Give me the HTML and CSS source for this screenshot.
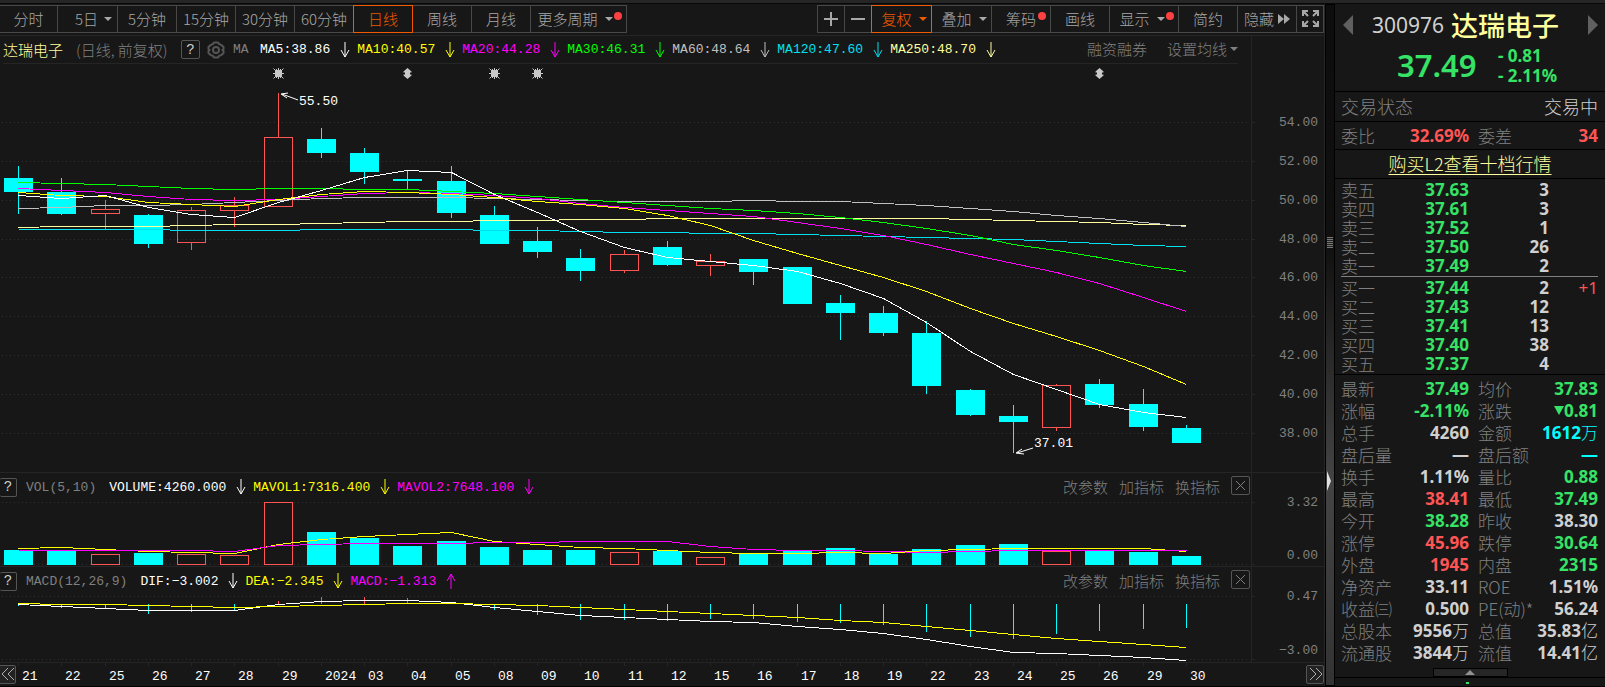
FILE: index.html
```html
<!DOCTYPE html>
<html lang="zh-CN">
<head>
    <meta charset="UTF-8">
    <meta name="viewport" content="width=device-width, initial-scale=1.0">
    <title>达瑞电子 300976</title>
    <link rel="stylesheet" href="styles.css">
</head>
<body>
    <div class="topstrip"></div>
    <div class="layout">
        <main class="main">
            <div class="toolbar">
                <div class="group periods">
                    <button type="button">分时</button>
                    <button type="button" class="day5">5日<i class="caret"></i></button>
                    <button type="button">5分钟</button>
                    <button type="button">15分钟</button>
                    <button type="button">30分钟</button>
                    <button type="button">60分钟</button>
                    <button type="button" class="active">日线</button>
                    <button type="button">周线</button>
                    <button type="button">月线</button>
                    <button type="button" class="more">更多周期<i class="caret"></i><i class="dot"></i></button>
                </div>
                <div class="group">
                    <button type="button" class="zoom" aria-label="放大"><svg width="14" height="14"><path d="M7 0V14M0 7H14"/></svg></button>
                    <button type="button" class="zoom" aria-label="缩小"><svg width="14" height="14"><path d="M0 7H14"/></svg></button>
                    <button type="button" class="drop active">复权<i class="caret"></i></button>
                    <button type="button" class="drop">叠加<i class="caret"></i></button>
                    <button type="button">筹码<i class="dot"></i></button>
                    <button type="button">画线</button>
                    <button type="button" class="show">显示<i class="caret"></i><i class="dot"></i></button>
                    <button type="button">简约</button>
                    <button type="button">隐藏<svg class="ff" width="12" height="10"><path d="M0 0L6 5L0 10ZM6 0L12 5L6 10Z"/></svg></button>
                    <button type="button" class="zoom" aria-label="全屏"><svg class="expand" width="17" height="17"><path d="M1 6V1H6M1 1L6 6M11 1H16V6M16 1L11 6M1 11V16H6M1 16L6 11M16 11V16H11M16 16L11 11"/></svg></button>
                </div>
            </div>

            <!-- K线 -->
            <section class="pane">
                <div class="plot">
                    <div class="legend legend-main">
                        <span class="stock">达瑞电子</span>
                        <span class="sub">(日线, 前复权)</span>
                        <button type="button" class="help">?</button>
                        <button type="button" class="gear" aria-label="设置">
                            <svg width="18" height="18"><path d="M6 3L7 1.5H11L12 3L14.5 4L16.5 6V8L15.5 9L16.5 10V12L14.5 14L12 15L11 16.5H7L6 15L3.5 14L1.5 12V10L2.5 9L1.5 8V6L3.5 4Z"/><circle cx="9" cy="9" r="3"/></svg>
                        </button>
                        <span class="mono ma">MA</span>
                        <span class="mono val white">MA5:38.86<svg class="arrow"><path d="M5 0V15M1 8L5 15L9 8"/></svg></span>
                        <span class="mono val yellow">MA10:40.57<svg class="arrow"><path d="M5 0V15M1 8L5 15L9 8"/></svg></span>
                        <span class="mono val magenta">MA20:44.28<svg class="arrow"><path d="M5 0V15M1 8L5 15L9 8"/></svg></span>
                        <span class="mono val lime">MA30:46.31<svg class="arrow"><path d="M5 0V15M1 8L5 15L9 8"/></svg></span>
                        <span class="mono val silver">MA60:48.64<svg class="arrow"><path d="M5 0V15M1 8L5 15L9 8"/></svg></span>
                        <span class="mono val aqua">MA120:47.60<svg class="arrow"><path d="M5 0V15M1 8L5 15L9 8"/></svg></span>
                        <span class="mono val cream">MA250:48.70<svg class="arrow"><path d="M5 0V15M1 8L5 15L9 8"/></svg></span>
                        <div class="links">
                            <button type="button">融资融券</button>
                            <button type="button">设置均线<i class="caret"></i></button>
                        </div>
                    </div>
                    <svg class="chart chart-k" id="kline"></svg>
                </div>
                <svg class="axis" id="axisK"></svg>
            </section>

            <!-- 成交量 -->
            <section class="pane">
                <div class="plot">
                    <div class="legend">
                        <button type="button" class="help edge">?</button>
                        <span class="mono name">VOL(5,10)</span>
                        <span class="mono val white">VOLUME:4260.000<svg class="arrow"><path d="M5 0V15M1 8L5 15L9 8"/></svg></span>
                        <span class="mono val yellow">MAVOL1:7316.400<svg class="arrow"><path d="M5 0V15M1 8L5 15L9 8"/></svg></span>
                        <span class="mono val magenta">MAVOL2:7648.100<svg class="arrow"><path d="M5 0V15M1 8L5 15L9 8"/></svg></span>
                        <div class="links tools">
                            <button type="button">改参数</button>
                            <button type="button">加指标</button>
                            <button type="button">换指标</button>
                            <button type="button" class="close" aria-label="关闭"><svg width="11" height="11"><path d="M1 1L10 10M10 1L1 10"/></svg></button>
                        </div>
                    </div>
                    <svg class="chart chart-vol" id="volume"></svg>
                </div>
                <svg class="axis" id="axisVol"></svg>
            </section>

            <!-- MACD -->
            <section class="pane">
                <div class="plot">
                    <div class="legend">
                        <button type="button" class="help edge">?</button>
                        <span class="mono name">MACD(12,26,9)</span>
                        <span class="mono val white">DIF:−3.002<svg class="arrow"><path d="M5 0V15M1 8L5 15L9 8"/></svg></span>
                        <span class="mono val yellow">DEA:−2.345<svg class="arrow"><path d="M5 0V15M1 8L5 15L9 8"/></svg></span>
                        <span class="mono val magenta">MACD:−1.313<svg class="arrow"><path d="M5 16V1M1 8L5 1L9 8"/></svg></span>
                        <div class="links tools">
                            <button type="button">改参数</button>
                            <button type="button">加指标</button>
                            <button type="button">换指标</button>
                            <button type="button" class="close" aria-label="关闭"><svg width="11" height="11"><path d="M1 1L10 10M10 1L1 10"/></svg></button>
                        </div>
                    </div>
                    <svg class="chart chart-macd" id="macd"></svg>
                </div>
                <svg class="axis" id="axisMacd"></svg>
            </section>

            <div class="timeline">
                <svg class="dates" id="dates"></svg>
                <button type="button" class="page prev" aria-label="向前"><svg width="13" height="13"><path d="M7 0L1 6L7 12M13 0L7 6L13 12"/></svg></button>
                <button type="button" class="page next" aria-label="向后"><svg width="13" height="13"><path d="M1 0L7 6L1 12M7 0L13 6L7 12"/></svg></button>
            </div>
        </main>

        <div class="splitter">
            <i class="grip"></i>
            <i class="fold"></i>
        </div>

        <aside class="side">
            <div class="quote">
                <div class="title">
                    <button type="button" aria-label="上一只"><svg width="10" height="20"><path d="M10 0V20L0 10Z"/></svg></button>
                    <span class="code">300976</span>
                    <h1>达瑞电子</h1>
                    <button type="button" class="right" aria-label="下一只"><svg width="10" height="20"><path d="M0 0V20L10 10Z"/></svg></button>
                </div>
                <div class="price">
                    <strong>37.49</strong>
                    <div class="change"><span>- 0.81</span><span>- 2.11%</span></div>
                </div>
            </div>
            <div class="status"><span>交易状态</span><b>交易中</b></div>
            <table class="stats ratio">
                <tr><th>委比</th><td class="up">32.69%</td><th>委差</th><td class="up">34</td></tr>
            </table>
            <div class="buy"><a href="#">购买L2查看十档行情</a></div>
            <div class="depth">
                <table class="orders">
                    <tr><th>卖五</th><td class="down">37.63</td><td>3</td><td></td></tr>
                    <tr><th>卖四</th><td class="down">37.61</td><td>3</td><td></td></tr>
                    <tr><th>卖三</th><td class="down">37.52</td><td>1</td><td></td></tr>
                    <tr><th>卖二</th><td class="down">37.50</td><td>26</td><td></td></tr>
                    <tr><th>卖一</th><td class="down">37.49</td><td>2</td><td></td></tr>
                </table>
                <hr>
                <table class="orders">
                    <tr><th>买一</th><td class="down">37.44</td><td>2</td><td class="delta">+1</td></tr>
                    <tr><th>买二</th><td class="down">37.43</td><td>12</td><td></td></tr>
                    <tr><th>买三</th><td class="down">37.41</td><td>13</td><td></td></tr>
                    <tr><th>买四</th><td class="down">37.40</td><td>38</td><td></td></tr>
                    <tr><th>买五</th><td class="down">37.37</td><td>4</td><td></td></tr>
                </table>
            </div>
            <table class="stats">
                <tr><th>最新</th><td class="down">37.49</td><th>均价</th><td class="down">37.83</td></tr>
                <tr><th>涨幅</th><td class="down">-2.11%</td><th>涨跌</th><td class="down"><i class="fall"></i>0.81</td></tr>
                <tr><th>总手</th><td>4260</td><th>金额</th><td class="cyan">1612<span>万</span></td></tr>
                <tr><th>盘后量</th><td>—</td><th>盘后额</th><td class="cyan">—</td></tr>
                <tr><th>换手</th><td>1.11%</td><th>量比</th><td class="down">0.88</td></tr>
                <tr><th>最高</th><td class="up">38.41</td><th>最低</th><td class="down">37.49</td></tr>
                <tr><th>今开</th><td class="down">38.28</td><th>昨收</th><td>38.30</td></tr>
                <tr><th>涨停</th><td class="up">45.96</td><th>跌停</th><td class="down">30.64</td></tr>
                <tr><th>外盘</th><td class="up">1945</td><th>内盘</th><td class="down">2315</td></tr>
                <tr><th>净资产</th><td>33.11</td><th>ROE</th><td>1.51%</td></tr>
                <tr><th>收益㈢</th><td>0.500</td><th>PE(动)*</th><td>56.24</td></tr>
                <tr><th>总股本</th><td>9556<span>万</span></td><th>总值</th><td>35.83<span>亿</span></td></tr>
                <tr><th>流通股</th><td>3844<span>万</span></td><th>流值</th><td>14.41<span>亿</span></td></tr>
            </table>
            <button type="button" class="expander" aria-label="展开"><svg width="10" height="5"><path d="M5 0L10 5H0Z"/></svg></button>
            <div class="tick"></div>
        </aside>
    </div>
    <script src="chart.js"></script>
</body>
</html>
```

FILE: styles.css
```css
* {
    box-sizing: border-box;
}
body {
    margin: 0;
    background: #000;
    color: #d0d0d0;
    font-family: "Noto Sans CJK SC", sans-serif;
    font-size: 15px;
    font-weight: 300;
}
button {
    margin: 0;
    padding: 0;
    border: none;
    background: none;
    color: inherit;
    font: inherit;
    cursor: pointer;
}
svg {
    display: block;
    fill: none;
    stroke: currentColor;
}
.topstrip {
    height: 4px;
    background: #262626;
    border-bottom: 1px solid #080808;
}
.layout {
    display: flex;
    align-items: stretch;
}
.main {
    flex: 1;
    min-width: 0;
    background: #171717;
    border-right: 1px solid #262626;
}

/* toolbar */
.toolbar {
    display: flex;
    justify-content: space-between;
    height: 32px;
    padding-top: 1px;
    border-bottom: 1px solid #252525;
}
.group {
    display: flex;
}
.group button {
    position: relative;
    display: flex;
    align-items: center;
    justify-content: center;
    width: 60px;
    height: 28px;
    margin-left: -1px;
    padding-bottom: 1px;
    border: 1px solid #484848;
    color: #a8a8a8;
    white-space: nowrap;
}
.group button.active {
    z-index: 1;
    border-color: #f05a00;
    color: #f05a00;
}
.periods button:first-child {
    width: 59px;
}
.group .day5 {
    width: 61px;
    padding-left: 12px;
}
.group .more {
    width: 97px;
    padding-right: 7px;
}
.group .zoom {
    width: 28px;
}
.group .drop {
    width: 61px;
    padding-left: 5px;
}
.group .show {
    width: 70px;
    padding-right: 4px;
}
.zoom svg {
    stroke-width: 2;
}
.group .ff {
    margin-left: 4px;
    fill: #a8a8a8;
    stroke: none;
}
.caret {
    margin-left: 7px;
    border: 4px solid transparent;
    border-top-color: currentColor;
    border-bottom: none;
}
.day5 .caret {
    margin-left: 6px;
}
.dot {
    position: absolute;
    top: 6px;
    right: 4px;
    width: 8px;
    height: 8px;
    border-radius: 50%;
    background: #ff4040;
}

/* chart panes */
.pane {
    display: grid;
    grid-template-columns: 1fr 73px;
    border-bottom: 1px solid #252525;
}
.plot {
    min-width: 0;
}
.legend {
    display: flex;
    align-items: center;
    height: 28px;
    color: #808080;
    white-space: nowrap;
}
.legend-main {
    margin: 0 13px 0 3px;
    border-bottom: 1px solid #252525;
}
.mono {
    font-family: "Liberation Mono", monospace;
    font-size: 13px;
    font-weight: 400;
}
.stock {
    color: #ffff9e;
}
.sub {
    width: 108px;
    padding-left: 13px;
}
.help,
.close {
    display: flex;
    align-items: center;
    justify-content: center;
    width: 19px;
    height: 19px;
    margin: 0 7px 0 11px;
    border: 1px solid #555;
    border-radius: 2px;
    color: #d0d0d0;
    font-family: "Liberation Mono", monospace;
    font-size: 14px;
}
.legend-main .help {
    margin-left: 10px;
}
.help.edge {
    width: 17px;
    margin: 0 9px 0 0;
    border-left: none;
}
.gear {
    color: #555;
}
.gear svg {
    stroke-width: 2;
}
.ma {
    width: 35px;
    padding-left: 8px;
}
.name {
    margin-right: 13px;
}
.val {
    display: flex;
    align-items: center;
    margin-right: 7px;
}
.arrow {
    width: 10px;
    height: 16px;
    margin-left: 10px;
}
.white { color: #fff; }
.yellow { color: #ff0; }
.magenta { color: #f0f; }
.lime { color: #0f0; }
.silver { color: #c0c0c0; }
.aqua { color: #00e0f0; }
.cream { color: #ffff9e; }
.links {
    display: flex;
    gap: 20px;
    margin-left: auto;
}
.links button {
    display: flex;
    align-items: center;
    padding-bottom: 2px;
}
.links .caret {
    margin-left: 3px;
}
.tools {
    gap: 11px;
}
.tools .close {
    width: 19px;
    margin: 0 1px 0 0;
    padding: 0;
    color: #808080;
}
.chart,
.axis,
.dates {
    width: 100%;
    overflow: hidden;
}
.chart-k { height: 408px; }
.chart-vol { height: 65px; }
.chart-macd { height: 67px; }
.axis {
    height: 100%;
    border-left: 1px solid #252525;
}
.crisp {
    shape-rendering: crispEdges;
}
.grid {
    stroke: #303030;
    stroke-dasharray: 1 3;
}
.mark {
    stroke: #252525;
}
.label {
    fill: #808080;
    stroke: none;
    font-family: "Liberation Mono", monospace;
    font-size: 13px;
    font-weight: 400;
}
.label.bright {
    fill: #fff;
}
.bar-down {
    fill: #0ff;
    stroke: none;
}
.line-down { stroke: #0ff; }
.line-up { stroke: #ff5555; }
.event {
    fill: #c8c8c8;
    stroke: none;
}
.rays {
    stroke: #c8c8c8;
}
.timeline {
    position: relative;
}
.dates {
    height: 23px;
}
.page {
    position: absolute;
    top: 2px;
    display: flex;
    align-items: center;
    justify-content: center;
    width: 18px;
    height: 19px;
    border: 1px solid #555;
    border-radius: 2px;
    background: #222;
    color: #b0b0b0;
}
.prev {
    left: -2px;
}
.next {
    right: 0;
}

/* splitter between chart and quote */
.splitter {
    position: relative;
    width: 10px;
    border: 1px solid #000;
    background: linear-gradient(#0d0d0d 0, #101010 35%, #444 70%, #333 100%);
}
.grip {
    position: absolute;
    top: 232px;
    left: 1px;
    width: 6px;
    height: 11px;
    background: repeating-linear-gradient(#777 0 1px, #222 1px 2px);
}
.fold {
    position: absolute;
    top: 466px;
    left: 1px;
    border: 10px solid transparent;
    border-left: 4px solid #e0e0e0;
    border-right: none;
}

/* quote panel */
.side {
    width: 270px;
    background: #171717;
}
.quote {
    height: 88px;
    padding: 3px 7px 0 8px;
    border-bottom: 1px solid #000;
}
.title {
    display: flex;
    align-items: center;
    height: 36px;
    color: #606060;
}
.title svg {
    fill: currentColor;
    stroke: none;
}
.title .right {
    margin-left: auto;
}
.code {
    margin: 0 7px 0 19px;
    color: #d0d0d0;
    font-family: "Noto Sans", sans-serif;
    font-size: 21px;
    font-weight: 400;
}
h1 {
    margin: 0;
    color: #ffff9e;
    font-size: 27px;
    font-weight: 500;
    line-height: 36px;
}
.price {
    display: flex;
    align-items: center;
    height: 46px;
    padding-left: 54px;
    color: #36e366;
    font-family: "Noto Sans", sans-serif;
}
.price strong {
    width: 101px;
    padding-bottom: 3px;
    font-size: 31px;
    font-weight: 600;
    line-height: 40px;
}
.change {
    display: grid;
    font-size: 17px;
    font-weight: 700;
    line-height: 20px;
}
.status {
    display: flex;
    align-items: center;
    justify-content: space-between;
    height: 30px;
    padding: 0 7px 2px 6px;
    border-bottom: 1px solid #000;
    color: #808080;
    font-size: 18px;
    line-height: 26px;
}
.status b {
    color: #d0d0d0;
    font-weight: 300;
}
.buy {
    height: 29px;
    border-bottom: 1px solid #000;
    font-size: 18px;
    line-height: 26px;
    text-align: center;
}
.buy a {
    color: #ffff9e;
    text-underline-offset: 3px;
}
table {
    width: 100%;
    border-collapse: collapse;
}
th {
    padding: 0;
    color: #808080;
    font-size: 17px;
    font-weight: 300;
    text-align: left;
    white-space: nowrap;
}
td {
    padding: 0;
    font-family: "Noto Sans", "Noto Sans CJK SC", sans-serif;
    font-size: 17px;
    font-weight: 700;
    text-align: right;
    white-space: nowrap;
}
td span {
    font-family: "Noto Sans CJK SC", sans-serif;
    font-weight: 300;
    line-height: 0;
}
.depth {
    padding: 1px 7px 1px 6px;
    border-bottom: 1px solid #000;
}
.depth hr {
    margin: 1px 0;
    border: none;
    border-top: 1px solid #808080;
}
.orders {
    table-layout: fixed;
}
.orders tr {
    height: 19px;
    line-height: 19px;
}
.orders th { width: 46px; }
.orders td:nth-child(2) { width: 82px; }
.orders td:nth-child(3) { width: 80px; }
.orders .delta {
    color: #ff5555;
    font-weight: 400;
}
.stats {
    width: calc(100% - 13px);
    margin: 3px 7px 4px 6px;
}
.stats tr {
    height: 22px;
    line-height: 20px;
}
.stats th:first-child { width: 54px; }
.stats td:nth-child(2) { width: 74px; }
.stats th:nth-child(3) { padding-left: 9px; }
.ratio {
    width: 100%;
    margin: 0;
    border-bottom: 1px solid #000;
    border-collapse: separate;
    border-spacing: 0;
}
.ratio tr {
    height: 27px;
}
.ratio th:first-child {
    width: 60px;
    padding-left: 6px;
}
.ratio td:last-child {
    padding-right: 7px;
}
.up { color: #ff5555; }
.down { color: #36e366; }
.cyan { color: #0ff; }
.fall {
    display: inline-block;
    margin-bottom: 2px;
    border: 5px solid transparent;
    border-top: 9px solid #36e366;
    border-bottom: none;
}
.expander {
    display: flex;
    align-items: center;
    justify-content: center;
    width: 75px;
    height: 9px;
    margin: 0 auto;
    border: 1px solid #000;
    background: #262626;
    color: #909090;
}
.expander svg {
    fill: currentColor;
    stroke: none;
}
.tick {
    height: 7px;
    border-top: 1px solid #000;
    background: linear-gradient(#36e366, #36e366) 131px 4px / 3px 3px no-repeat;
}
```

FILE: chart.js
```js
// body top, body bottom, high, low, 1 = rising
const candles = [
    [178, 192, 166, 214, 0], [192, 214, 178, 215, 0], [209, 213, 200, 229, 1], [215, 244, 214, 248, 0],
    [210, 242, 207, 250, 1], [205, 210, 197, 227, 1], [137, 206, 93, 206, 1], [139, 153, 128, 158, 0],
    [153, 172, 148, 184, 0], [179, 181, 170, 189, 0], [181, 213, 166, 218, 0], [215, 244, 206, 244, 0],
    [241, 252, 227, 258, 0], [258, 271, 249, 281, 0], [254, 270, 250, 273, 1], [247, 265, 241, 266, 0],
    [261, 265, 254, 276, 1], [259, 272, 259, 285, 0], [267, 304, 267, 304, 0], [303, 313, 295, 340, 0],
    [313, 333, 306, 336, 0], [333, 386, 321, 394, 0], [390, 415, 389, 416, 0], [416, 422, 405, 453, 0],
    [385, 427, 384, 431, 1], [384, 405, 379, 408, 0], [404, 427, 389, 431, 0], [428, 443, 425, 443, 0]
];
const averages = {
    '#00e0f0': [229, 229, 229, 229, 230, 230, 230, 229, 229, 229, 229, 230, 230, 231, 232, 232, 233, 233, 234, 235, 236, 237, 238, 239, 241, 243, 245, 246],
    '#ffff9e': [227, 226, 226, 226, 225, 224, 224, 223, 222, 221, 221, 220, 220, 219, 219, 218, 218, 218, 218, 218, 218, 218, 219, 220, 221, 222, 224, 225],
    '#c0c0c0': [208, 207, 205, 205, 204, 202, 200, 198, 197, 197, 197, 198, 199, 200, 201, 201, 201, 200, 201, 201, 203, 205, 208, 211, 215, 218, 222, 226],
    '#00ff00': [182, 183, 184, 186, 188, 189, 188, 188, 189, 189, 191, 193, 196, 199, 202, 205, 208, 210, 213, 217, 222, 228, 235, 244, 250, 257, 265, 271],
    '#ff00ff': [188, 190, 192, 196, 199, 200, 199, 196, 193, 192, 193, 195, 198, 203, 207, 210, 213, 216, 222, 228, 235, 244, 254, 263, 272, 283, 297, 311],
    '#ffff00': [192, 195, 196, 202, 204, 206, 199, 194, 191, 192, 194, 197, 201, 204, 208, 215, 225, 240, 253, 265, 277, 291, 308, 323, 336, 350, 366, 384],
    '#ffffff': [195, 198, 195, 207, 214, 217, 202, 190, 177, 170, 172, 194, 212, 231, 247, 257, 261, 265, 271, 283, 298, 322, 351, 374, 389, 404, 412, 417]
};
const volumes = [550, 551, 554, 553, 554, 555, 502, 532, 538, 546, 541, 547, 550, 550, 552, 551, 557, 554, 551, 548, 554, 549, 545, 544, 551, 551, 552, 556];
const volumeAverages = {
    '#ffff00': [548, 547, 549, 551, 552, 553, 544, 539, 536, 534, 532, 541, 544, 547, 548, 550, 552, 553, 553, 552, 553, 550, 549, 548, 548, 548, 548, 551],
    '#ff00ff': [550, 550, 550, 550, 550, 551, 545, 544, 543, 543, 543, 542, 542, 541, 541, 541, 546, 549, 550, 550, 551, 552, 551, 550, 550, 550, 550, 550]
};
const sticks = [606, 608, 609, 614, 612, 610, 601, 597, 597, 598, 603, 610, 615, 620, 620, 621, 619, 619, 622, 623, 625, 632, 637, 639, 634, 631, 629, 628];
const macdLines = {
    '#ffffff': [604, 606, 608, 610, 610, 610, 604, 601, 600, 600, 602, 607, 611, 615, 617, 619, 621, 622, 626, 629, 633, 639, 646, 652, 653, 655, 657, 660],
    '#ffff00': [603, 604, 604, 605, 606, 607, 606, 605, 604, 603, 603, 604, 605, 607, 609, 611, 613, 615, 617, 620, 622, 626, 630, 634, 638, 641, 644, 647]
};
const days = ['21', '22', '25', '26', '27', '28', '29', '2024', '03', '04', '05', '08', '09', '10', '11', '12', '15', '16', '17', '18', '19', '22', '23', '24', '25', '26', '29', '30'];

const FIRST = 18;
const LAST_GAP = 65;
let width;

function x(i) {
    return Math.round(FIRST + i * (width - FIRST - LAST_GAP) / (days.length - 1));
}

function line(x1, y1, x2, y2, cls) {
    return `<line class="crisp ${cls}" x1="${x1}" y1="${y1}" x2="${x2}" y2="${y2}"/>`;
}

function grid(ys) {
    return ys.map(y => line(2, y + 0.5, width - 3, y + 0.5, 'grid')).join('');
}

function curves(set) {
    return Object.entries(set).map(([color, ys]) =>
        `<polyline class="crisp" stroke="${color}" points="${ys.map((y, i) => `${x(i) + 0.5},${y + 0.5}`).join(' ')}"/>`
    ).join('');
}

function bar(i, top, bottom, rising) {
    if (rising) {
        return `<rect class="crisp line-up" x="${x(i) - 13.5}" y="${top + 0.5}" width="28" height="${bottom - top}"/>`;
    }
    return `<rect class="crisp bar-down" x="${x(i) - 14}" y="${top}" width="29" height="${bottom - top}"/>`;
}

function text(tx, y, str, cls = '', anchor = 'start') {
    return `<text class="label ${cls}" x="${tx}" y="${y}" text-anchor="${anchor}">${str}</text>`;
}

function star(i) {
    return `<g transform="translate(${x(i) + 0.5} 73.5)">
        <path class="event" d="M-3.5-3.5H3.5V3.5H-3.5Z"/>
        <path class="rays" d="M0-5.5V5.5M-5.5 0H5.5M-5-5L5 5M5-5L-5 5M-2-4.5V4.5M2-4.5V4.5"/>
    </g>`;
}

function updown(i) {
    return `<path class="event" transform="translate(${x(i) + 0.5} 73.5)" d="M0-5.5L4-2V-1H2.5V1H4V2L0 5.5L-4 2V1H-2.5V-1H-4V-2Z"/>`;
}

// view is [top, height] of the pane on the shared y scale
function put(id, view, html) {
    const svg = document.getElementById(id);
    svg.setAttribute('viewBox', `0 ${view[0]} ${svg.clientWidth} ${view[1]}`);
    svg.innerHTML = html;
}

function axis(id, view, ticks) {
    put(id, view, ticks.map(([y, str, labelY]) =>
        line(0, y + 0.5, 3, y + 0.5, 'mark') + text(66, (labelY || y) + 4, str, '', 'end')
    ).join(''));
}

function draw() {
    width = document.getElementById('kline').clientWidth;

    put('kline', [64, 408],
        grid([122, 161, 200, 239, 277, 316, 355, 394, 433]) +
        candles.map(([top, bottom, high, low, up], i) => {
            const cls = up ? 'line-up' : 'line-down';
            const c = x(i) + 0.5;
            return line(c, high, c, top, cls) + line(c, bottom, c, low, cls) + bar(i, top, bottom, up);
        }).join('') +
        curves(averages) +
        [6, 11, 12].map(star).join('') + [9, 25].map(updown).join('') +
        `<path class="white" d="M${x(6) + 20} 100L${x(6) + 4} 94M${x(6) + 10} 93L${x(6) + 3} 94L${x(6) + 9} 98"/>` +
        text(x(6) + 21, 105, '55.50', 'bright') +
        `<path class="white" d="M${x(23) + 20} 448L${x(23) + 4} 453M${x(23) + 9} 449L${x(23) + 3} 453L${x(23) + 11} 454"/>` +
        text(x(23) + 21, 447, '37.01', 'bright'));
    axis('axisK', [36, 436], [
        [122, '54.00'], [161, '52.00'], [200, '50.00'], [239, '48.00'], [277, '46.00'],
        [316, '44.00'], [355, '42.00'], [394, '40.00'], [433, '38.00']
    ]);

    put('volume', [501, 65],
        grid([502, 564]) +
        volumes.map((y, i) => bar(i, y, candles[i][4] ? 564 : 565, candles[i][4])).join('') +
        curves(volumeAverages));
    axis('axisVol', [473, 93], [[502, '3.32'], [564, '0.00', 555]]);

    put('macd', [595, 67],
        grid([596, 659]) +
        sticks.map((y, i) => line(x(i) + 0.5, 604, x(i) + 0.5, y, y < 604 ? 'line-up' : 'line-down')).join('') +
        curves(macdLines));
    axis('axisMacd', [567, 95], [[596, '0.47'], [659, '−3.00', 650]]);

    put('dates', [663, 23],
        days.map((d, i) => line(x(i) + 0.5, 663, x(i) + 0.5, 666, 'mark') + text(x(i) + 4, 680, d, 'bright')).join(''));
}

draw();
window.addEventListener('resize', draw);
```
